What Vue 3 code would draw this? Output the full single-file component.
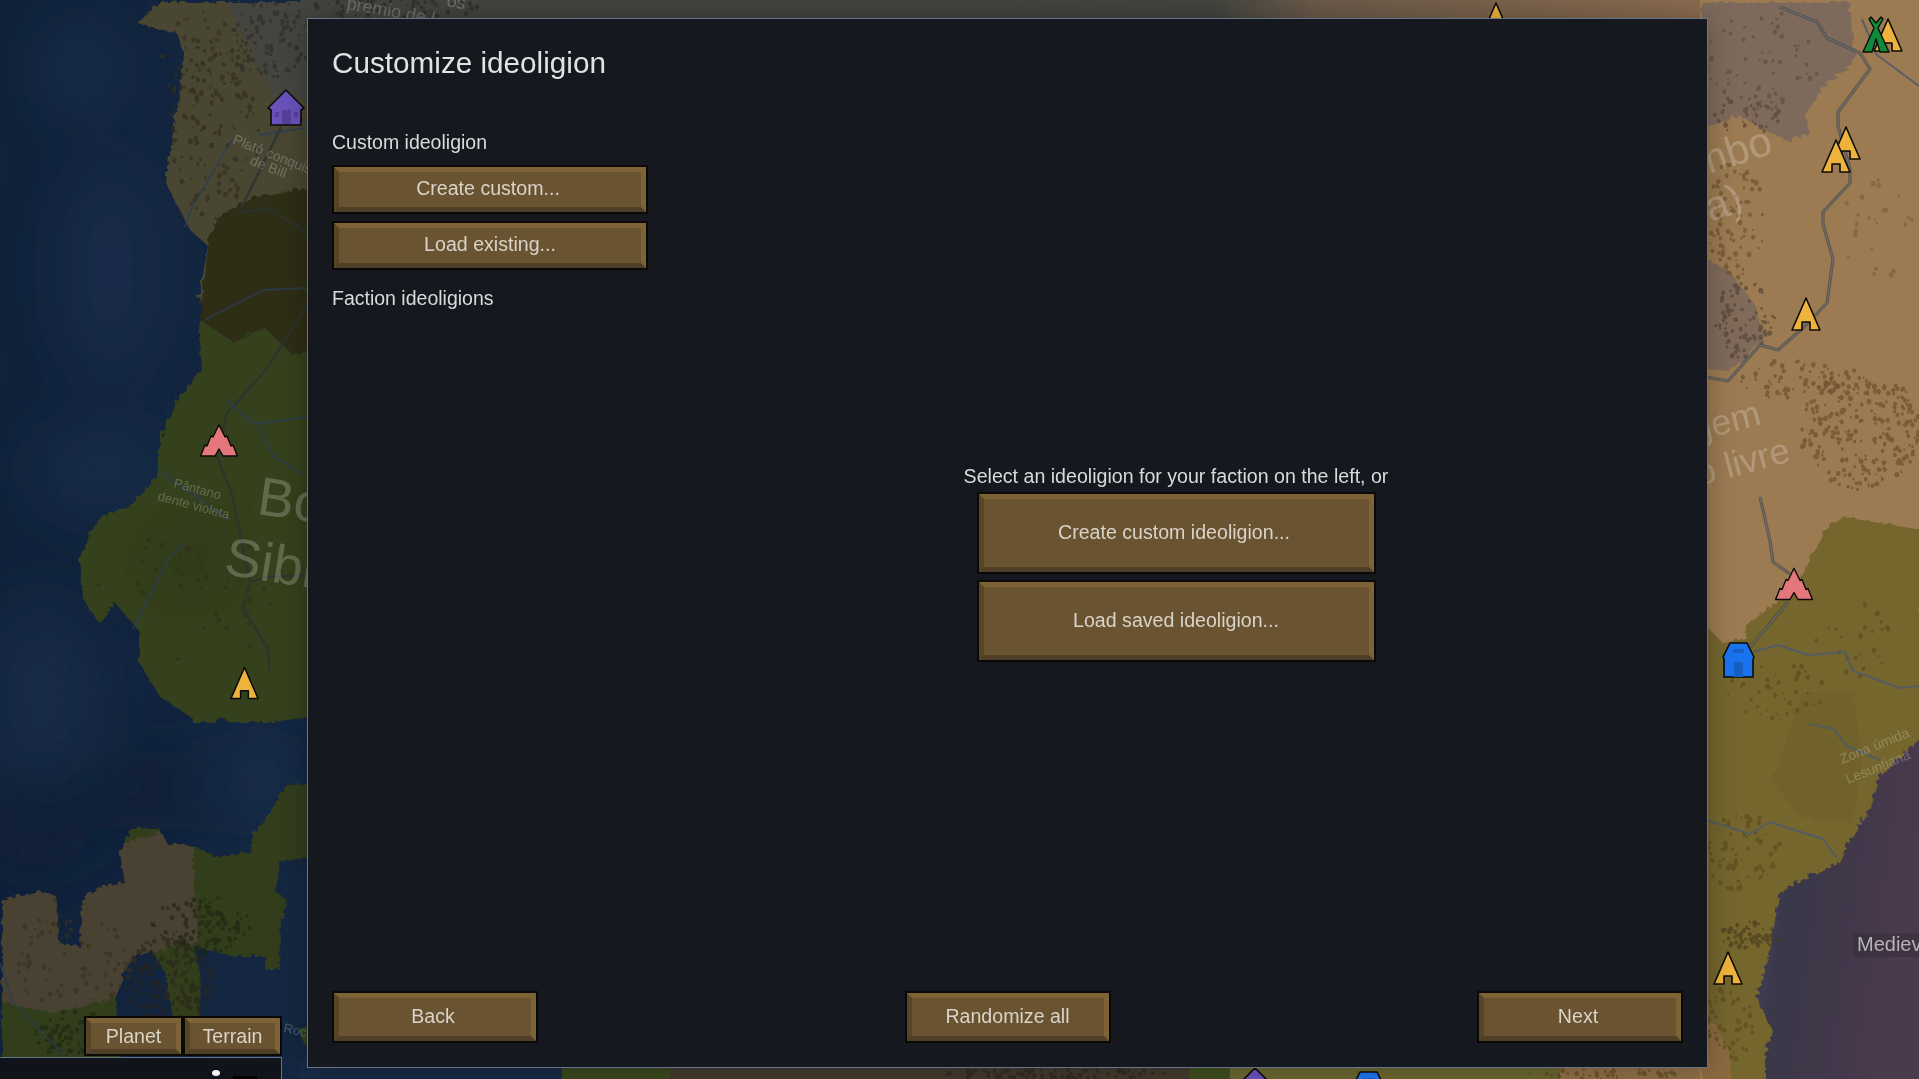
<script setup>
import { computed } from 'vue'

// left coast, top landmass
const coastNorth = '158,0 134,20 154,27 174,30 181,50 178,87 172,123 163,180 187,227 205,243 199,277 196,317 199,367 187,383 173,400 157,443 155,474 127,504 97,515 77,556 80,595 97,621 113,601 137,629 137,660 157,694 190,716 190,742 203,738 217,714 247,731 277,718 307,714 330,714 330,0'
const coastSouth = '330,781 285,782 270,807 250,833 248,850 213,855 193,844 165,842 157,826 130,826 117,850 122,880 97,885 80,898 78,945 57,941 53,893 37,889 0,898 0,1079 120,1079 113,993 130,954 150,948 163,971 170,1015 197,1015 198,976 193,945 233,954 263,954 263,967 277,967 278,928 285,898 273,889 277,859 307,855 330,855'
const eastOcean = '1919,736 1877,774 1867,808 1847,839 1837,860 1800,878 1778,890 1772,918 1767,949 1755,997 1770,1028 1763,1055 1763,1079 1919,1079'

const westRoads = [
  '281,127 239,213 268,208 307,233',
  '310,300 268,367 239,400 227,413 217,456 232,495 250,582 243,608 267,647 270,670',
  '250,582 267,577 310,575'
]
const eastRoads = [
  '1780,7 1817,22 1827,38 1860,53 1870,69 1838,112 1838,126 1850,169 1850,183 1823,212 1823,224 1833,259 1827,303 1803,328 1778,350 1760,345 1728,381 1700,376',
  '1760,497 1770,541 1773,562 1790,574',
  '1788,602 1750,647'
]
const westRivers = [
  '232,140 192,207 185,227',
  '259,135 310,127',
  '205,320 263,290 310,288',
  '227,400 253,424 310,417',
  '257,426 273,456 302,474',
  '183,545 170,556 133,629',
  '157,469 230,521',
  '0,963 13,1002 63,1054'
]
const eastRivers = [
  '1753,652 1778,645 1808,655 1845,652 1853,671 1900,688 1919,686',
  '1700,818 1750,834 1770,822 1823,839 1837,858',
  '1810,724 1833,729 1847,746 1880,760',
  '1862,19 1877,55 1919,86'
]

const markers = [
  { id: 'tent', x: 1481, y: 2, w: 30, h: 34 },
  { id: 'house', x: 267, y: 89, w: 38, h: 37 },
  { id: 'camp', x: 200, y: 424, w: 38, h: 33 },
  { id: 'tent', x: 230, y: 666, w: 29, h: 34 },
  { id: 'tent', x: 1873, y: 18, w: 30, h: 34 },
  { id: 'teepee', x: 1862, y: 16, w: 28, h: 37 },
  { id: 'tent', x: 1831, y: 126, w: 30, h: 34 },
  { id: 'tent', x: 1821, y: 139, w: 30, h: 34 },
  { id: 'tent', x: 1791, y: 297, w: 30, h: 34 },
  { id: 'camp', x: 1775, y: 567, w: 38, h: 34 },
  { id: 'shed', x: 1722, y: 642, w: 33, h: 36 },
  { id: 'tent', x: 1713, y: 951, w: 30, h: 34 },
  { id: 'house', x: 1236, y: 1067, w: 38, h: 37 },
  { id: 'shed', x: 1352, y: 1071, w: 33, h: 36 }
]

// cx, cy, rx, ry, count, colour
const clusters = [
  [215, 130, 45, 90, 130, '#2e2a1c'],
  [200, 60, 40, 50, 50, '#35301f'],
  [270, 40, 45, 40, 110, '#2e2d28'],
  [170, 980, 45, 45, 190, '#2a2518'],
  [70, 960, 70, 45, 80, '#35301f'],
  [200, 925, 50, 30, 110, '#20240f'],
  [75, 1035, 40, 24, 90, '#20240f'],
  [190, 590, 100, 70, 40, '#2a2e16'],
  [400, 8, 90, 10, 60, '#2b2a24'],
  [1760, 60, 60, 50, 60, '#5e4b3c'],
  [1745, 115, 35, 20, 40, '#5a4330'],
  [1735, 220, 30, 60, 80, '#6b4e2c'],
  [1745, 320, 30, 40, 80, '#534034'],
  [1860, 430, 60, 60, 260, '#6a4c2a'],
  [1790, 380, 50, 20, 60, '#6a4c2a'],
  [1880, 230, 40, 50, 25, '#7d6038'],
  [1775, 690, 50, 30, 40, '#5e4a20'],
  [1850, 640, 40, 40, 25, '#5e4a20'],
  [1740, 850, 40, 40, 70, '#5c4b1e'],
  [1750, 935, 30, 14, 70, '#4a3a1a'],
  [1730, 1020, 25, 40, 50, '#5c4b1e'],
  [1600, 1074, 80, 5, 40, '#5e4a20'],
  [1050, 1074, 120, 5, 80, '#2c2619']
]

// small seeded generator, so the speckle stays the same between runs
const makeRandom = (seed) => () => {
  seed = (seed + 0x6d2b79f5) | 0
  let t = Math.imul(seed ^ (seed >>> 15), 1 | seed)
  t = (t + Math.imul(t ^ (t >>> 7), 61 | t)) ^ t
  return ((t ^ (t >>> 14)) >>> 0) / 4294967296
}

const speckles = computed(() => {
  const random = makeRandom(41)
  return clusters.map(([cx, cy, rx, ry, count, color]) => {
    let d = ''
    for (let n = 0; n < count; n++) {
      const angle = random() * Math.PI * 2
      const dist = Math.sqrt(random())
      const x = (cx + Math.cos(angle) * dist * rx).toFixed(1)
      const y = (cy + Math.sin(angle) * dist * ry).toFixed(1)
      const r = (1 + random() * 1.7).toFixed(1)
      d += `M${x} ${y}m${-r} 0l${r / 2} ${-r}h${r}l${r / 2} ${r}l${-r / 2} ${r}h${-r}z`
    }
    return { d, color }
  })
})
</script>

<template>
  <div class="screen">
    <svg class="map" viewBox="0 0 1919 1079" width="1919" height="1079">
      <defs>
        <linearGradient id="west-sea" x1="0" y1="0" x2="1" y2="0">
          <stop offset="0" stop-color="#10213a" />
          <stop offset="1" stop-color="#152843" />
        </linearGradient>
        <linearGradient id="east-sea" x1="0" y1="0" x2="1" y2="0.3">
          <stop offset="0" stop-color="#474a68" />
          <stop offset="0.3" stop-color="#3a3749" />
          <stop offset="1" stop-color="#4a3a4c" />
        </linearGradient>
        <linearGradient id="top-strip" x1="0" y1="0" x2="1" y2="0">
          <stop offset="0" stop-color="#43443e" />
          <stop offset="0.65" stop-color="#43453f" />
          <stop offset="0.72" stop-color="#6b5a49" />
          <stop offset="1" stop-color="#8b6c50" />
        </linearGradient>
        <filter id="blur-big" x="-30%" y="-30%" width="160%" height="160%"><feGaussianBlur stdDeviation="30" /></filter>
        <filter id="blur-small"><feGaussianBlur stdDeviation="0.5" /></filter>
        <filter id="rough" x="-5%" y="-5%" width="110%" height="110%">
          <feTurbulence type="turbulence" baseFrequency="0.14" numOctaves="1" seed="4" result="noise" />
          <feDisplacementMap in="SourceGraphic" in2="noise" scale="7" />
        </filter>
        <clipPath id="west-north"><polygon :points="coastNorth" /></clipPath>
        <clipPath id="west-south"><polygon :points="coastSouth" /></clipPath>

        <symbol id="tent" viewBox="0 0 30 34">
          <path d="M15 1 29 33H19V25H11V33H1Z" fill="#eeb33c" stroke="#0b0b08" stroke-width="1.6" stroke-linejoin="round" />
        </symbol>
        <symbol id="camp" viewBox="0 0 38 33">
          <path d="M19 .8 25 13 27 12 31 22 33 21 37.4 32H23L19 25 15 32H.6L5 21 7 22 11 12 13 13Z" fill="#e4777c" stroke="#0b0b08" stroke-width="1.4" stroke-linejoin="round" />
        </symbol>
        <symbol id="teepee" viewBox="0 0 28 37">
          <path d="M9 1 14 7 19 1 21 3 16 12 27 36H18L14 23 10 36H1L12 12 7 3Z" fill="#108a3a" stroke="#0b0b08" stroke-width="1.4" stroke-linejoin="round" />
        </symbol>
        <symbol id="house" viewBox="0 0 38 37">
          <path d="M19 1 37 19 34 21V36H4V21L1 19Z" fill="#6a52ba" stroke="#0b0b08" stroke-width="1.6" stroke-linejoin="round" />
          <rect x="15" y="21" width="9" height="14" fill="#574199" />
          <rect x="8" y="23" width="4" height="5" fill="#574199" />
          <rect x="27" y="23" width="4" height="5" fill="#574199" />
        </symbol>
        <symbol id="shed" viewBox="0 0 33 36">
          <path d="M8 1H25L32 15 31 17V35H2V17L1 15Z" fill="#1a74f0" stroke="#0b0b08" stroke-width="1.6" stroke-linejoin="round" />
          <rect x="11" y="7" width="11" height="4" fill="#1660c4" />
          <rect x="12" y="20" width="9" height="15" fill="#1660c4" />
        </symbol>
      </defs>

      <!-- seas -->
      <rect width="340" height="1079" fill="url(#west-sea)" />
      <g filter="url(#blur-big)" opacity="0.55">
        <ellipse cx="80" cy="70" rx="30" ry="40" fill="#24405f" />
        <ellipse cx="110" cy="270" rx="50" ry="110" fill="#1c3352" />
        <ellipse cx="100" cy="470" rx="70" ry="40" fill="#1d3454" />
        <ellipse cx="150" cy="790" rx="110" ry="40" fill="#0c1a30" />
        <ellipse cx="40" cy="700" rx="60" ry="100" fill="#1b3150" />
        <ellipse cx="260" cy="780" rx="50" ry="30" fill="#1d3454" />
        <ellipse cx="40" cy="820" rx="50" ry="50" fill="#0c1a30" />
      </g>

      <!-- land strips above and below the window -->
      <rect x="300" y="0" width="1410" height="24" fill="url(#top-strip)" />
      <rect x="300" y="1060" width="262" height="19" fill="#182b46" />
      <rect x="562" y="1060" width="108" height="19" fill="#3a481e" />
      <rect x="670" y="1060" width="520" height="19" fill="#423a2c" />
      <rect x="1190" y="1060" width="40" height="19" fill="#3f4d1f" />
      <rect x="1230" y="1060" width="330" height="19" fill="#6b6630" />
      <rect x="1560" y="1060" width="150" height="19" fill="#8f6f48" />

      <!-- west land -->
      <g filter="url(#rough)">
        <g clip-path="url(#west-north)">
          <rect x="120" y="0" width="220" height="300" fill="#4a4631" />
          <polygon points="225,0 340,0 340,100 270,95" fill="#45453f" />
          <polygon points="205,243 215,215 250,195 340,180 340,345 290,352 262,325 232,340 198,318" fill="#2e2f19" />
          <polygon points="198,318 232,340 262,325 290,352 340,345 340,720 100,720 60,560 120,420" fill="#353f1e" />
        </g>
        <g clip-path="url(#west-south)">
          <rect x="0" y="780" width="340" height="300" fill="#333c1f" />
          <polygon points="0,880 190,820 195,940 150,950 113,993 100,1000 50,1010 0,1000" fill="#4a4332" />
        </g>
        <polygon points="297,1025 309,1023 309,1045 302,1044" fill="#33401f" />
      </g>
      <ellipse cx="190" cy="560" rx="40" ry="35" fill="#2b3316" opacity="0.5" filter="url(#blur-big)" />

      <!-- east land -->
      <rect x="1700" y="0" width="219" height="1079" fill="#9c7b52" />
      <g filter="url(#rough)">
        <polygon points="1700,0 1847,0 1853,52 1847,65 1823,83 1803,110 1807,131 1787,140 1737,114 1700,125" fill="#7e6a5c" />
        <polygon points="1700,255 1727,269 1753,303 1762,338 1730,369 1700,365" fill="#806a5a" />
        <polygon points="1919,527 1840,514 1823,527 1800,571 1777,598 1743,622 1743,636 1720,640 1700,620 1700,1079 1790,1079 1919,1079" fill="#75662f" />
        <polygon points="1700,1015 1712,1021 1727,1050 1730,1079 1700,1079" fill="#8c6a40" />
        <polygon points="1800,690 1850,690 1860,760 1850,820 1800,815 1770,780" fill="#70622c" />
        <polygon :points="eastOcean" fill="url(#east-sea)" />
      </g>

      <g filter="url(#blur-small)">
        <path v-for="(s, i) in speckles" :key="i" :d="s.d" :fill="s.color" opacity="0.65" />
      </g>

      <!-- roads and rivers -->
      <polyline v-for="(p, i) in westRoads" :key="'wr' + i" :points="p" class="road-west" />
      <polyline v-for="(p, i) in westRivers" :key="'ww' + i" :points="p" class="river-west" />
      <polyline v-for="(p, i) in eastRoads" :key="'er' + i" :points="p" class="road-back" />
      <polyline v-for="(p, i) in eastRoads" :key="'ec' + i" :points="p" class="road-core" />
      <polyline v-for="(p, i) in eastRivers" :key="'ew' + i" :points="p" class="river-east" />

      <!-- map labels -->
      <g class="labels">
        <text x="256" y="514" transform="rotate(8 256 514)" font-size="54">Bo</text>
        <text x="223" y="574" transform="rotate(9 223 574)" font-size="54">Sibi</text>
        <text x="1697" y="178" transform="rotate(-18 1697 178)" font-size="42">mbo</text>
        <text x="1710" y="222" transform="rotate(-18 1710 222)" font-size="42">a)</text>
        <text x="1695" y="442" transform="rotate(-15 1695 442)" font-size="36">gem</text>
        <text x="1699" y="486" transform="rotate(-15 1699 486)" font-size="36">o livre</text>
        <text x="346" y="9" transform="rotate(10 346 9)" font-size="18">premio de l</text>
        <text x="446" y="6" transform="rotate(10 446 6)" font-size="18">os</text>
        <text x="232" y="143" transform="rotate(22 232 143)" font-size="14">Plató conquist</text>
        <text x="249" y="164" transform="rotate(22 249 164)" font-size="14">de Bill</text>
        <text x="173" y="487" transform="rotate(15 173 487)" font-size="13">Pântano</text>
        <text x="157" y="500" transform="rotate(15 157 500)" font-size="13">dente violeta</text>
        <text x="1842" y="764" transform="rotate(-22 1842 764)" font-size="14">Zona úmida</text>
        <text x="1848" y="784" transform="rotate(-22 1848 784)" font-size="14">Lesuntiana</text>
        <text x="283" y="1032" transform="rotate(12 283 1032)" font-size="13">Roch</text>
      </g>
      <rect x="1853" y="933" width="66" height="24" fill="#000" opacity="0.12" />
      <text x="1857" y="951" class="region-name">Mediev</text>

      <use
        v-for="(m, i) in markers"
        :key="'m' + i"
        :href="'#' + m.id"
        :x="m.x"
        :y="m.y"
        :width="m.w"
        :height="m.h"
      />
    </svg>

    <div class="world-controls">
      <div class="tabs">
        <button class="btn btn-tab" type="button"><span class="btn-face">Planet</span></button>
        <button class="btn btn-tab" type="button"><span class="btn-face">Terrain</span></button>
      </div>
      <div class="world-panel">
        <span class="pawn"></span>
        <span class="pawn-bar"></span>
      </div>
    </div>

    <section class="window">
      <h1 class="window-title">Customize ideoligion</h1>

      <div class="window-body">
        <div class="side">
          <h2 class="side-label">Custom ideoligion</h2>
          <button class="btn btn-side btn-nudge" type="button"><span class="btn-face">Create custom...</span></button>
          <button class="btn btn-side" type="button"><span class="btn-face">Load existing...</span></button>
          <h2 class="side-label side-label-next">Faction ideoligions</h2>
        </div>

        <div class="main">
          <p class="hint">Select an ideoligion for your faction on the left, or</p>
          <button class="btn btn-large btn-nudge" type="button"><span class="btn-face">Create custom ideoligion...</span></button>
          <button class="btn btn-large" type="button"><span class="btn-face">Load saved ideoligion...</span></button>
        </div>
      </div>

      <div class="window-footer">
        <button class="btn btn-footer btn-nudge" type="button"><span class="btn-face">Back</span></button>
        <button class="btn btn-footer" type="button"><span class="btn-face">Randomize all</span></button>
        <button class="btn btn-footer btn-nudge" type="button"><span class="btn-face">Next</span></button>
      </div>
    </section>
  </div>
</template>

<style>
html,
body {
  overflow: hidden;
  background: #10213a;
}
</style>

<style scoped>
.screen {
  position: relative;
  width: 1919px;
  height: 1079px;
  overflow: hidden;
  font-family: "Liberation Sans", Arial, sans-serif;
  color: #dedede;
}

.map {
  position: absolute;
  inset: 0;
  display: block;
}

.road-west {
  fill: none;
  stroke: #2b3330;
  stroke-width: 2.6;
  stroke-linejoin: round;
  opacity: 0.8;
}

.river-west {
  fill: none;
  stroke: #2b3f52;
  stroke-width: 1.8;
  stroke-linejoin: round;
  opacity: 0.8;
}

.road-back {
  fill: none;
  stroke: #3a3a38;
  stroke-width: 3.2;
  stroke-linejoin: round;
  opacity: 0.6;
}

.road-core {
  fill: none;
  stroke: #6b7278;
  stroke-width: 1.4;
  stroke-linejoin: round;
  opacity: 0.8;
}

.river-east {
  fill: none;
  stroke: #4d5a68;
  stroke-width: 2;
  stroke-linejoin: round;
  opacity: 0.85;
}

.labels text {
  font-family: "Liberation Sans", Arial, sans-serif;
  fill: #fff;
  opacity: 0.22;
}

.region-name {
  font-family: "Liberation Sans", Arial, sans-serif;
  font-size: 20px;
  fill: #b4b2b8;
}

.window {
  position: absolute;
  left: 307px;
  top: 18px;
  width: 1401px;
  height: 1050px;
  box-sizing: border-box;
  display: flex;
  flex-direction: column;
  padding: 26px 24px 24px;
  background: #15181e;
  border: 1px solid #66768a;
  box-shadow: 0 0 26px rgba(0, 0, 0, 0.28);
}

.window-title {
  margin: 0;
  font-size: 29.7px;
  line-height: 36px;
  font-weight: 400;
  color: #e2e2e2;
}

.window-body {
  flex: 1;
  display: flex;
  gap: 21px;
  margin-top: 49px;
}

.side {
  width: 316px;
  display: flex;
  flex-direction: column;
  gap: 7px;
}

.side-label {
  margin: 0 0 4px;
  font-size: 19.5px;
  line-height: 24px;
  font-weight: 400;
  color: #dadada;
}

.side-label-next {
  margin-top: 9px;
}

.main {
  flex: 1;
  display: flex;
  flex-direction: column;
  align-items: center;
  gap: 6px;
  padding-top: 334px;
}

.hint {
  margin: 0 0 -2px;
  font-size: 19.6px;
  line-height: 24px;
  color: #dadada;
}

.btn {
  display: block;
  box-sizing: border-box;
  padding: 0;
  background: #0a0906;
  border: 2px solid #0a0906;
  font-family: inherit;
  font-size: 19.6px;
  color: #d8d4ca;
  cursor: pointer;
}

.btn-face {
  display: flex;
  align-items: center;
  justify-content: center;
  box-sizing: border-box;
  width: 100%;
  height: 100%;
  padding-bottom: 2px;
  background: #6a5330;
  border-style: solid;
  border-width: 5px;
  border-color: #7e6336 #7e6336 #4f3f26 #574528;
}

.btn-nudge .btn-face {
  padding-right: 4px;
}

.btn-side {
  width: 316px;
  height: 49px;
}

.btn-large {
  width: 399px;
  height: 82px;
}

.btn-footer {
  width: 206px;
  height: 52px;
}

.btn-tab {
  width: 99px;
  height: 40px;
}

.btn-tab .btn-face {
  padding-bottom: 0;
}

.window-footer {
  display: flex;
  justify-content: space-between;
}

.world-controls {
  position: absolute;
  left: 0;
  bottom: 0;
  width: 282px;
}

.tabs {
  display: flex;
  justify-content: flex-end;
  height: 40px;
}

.world-panel {
  position: relative;
  box-sizing: border-box;
  height: 22px;
  margin-top: 1px;
  background: #10131a;
  border-top: 1px solid #66768a;
  border-right: 1px solid #66768a;
}

.pawn {
  position: absolute;
  left: 212px;
  top: 12px;
  width: 8px;
  height: 6px;
  border-radius: 50%;
  background: #f4f4f4;
}

.pawn-bar {
  position: absolute;
  left: 233px;
  top: 18px;
  width: 24px;
  height: 3px;
  background: #000;
}
</style>
